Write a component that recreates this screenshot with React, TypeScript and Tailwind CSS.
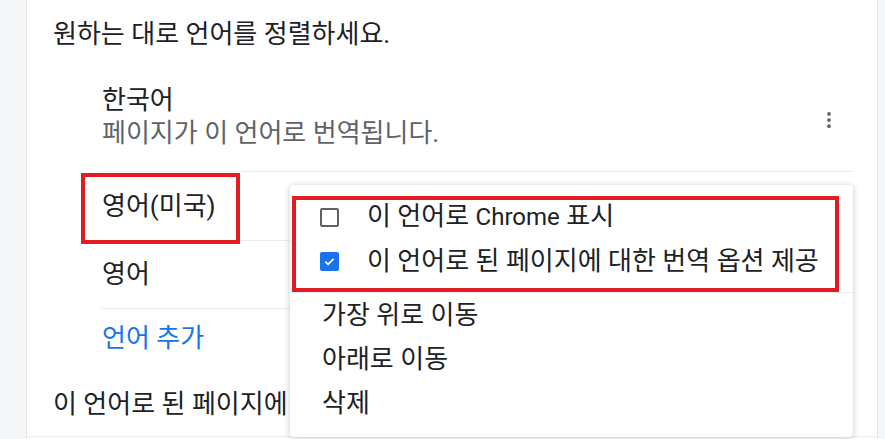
import { ReactNode } from 'react'

function Checkbox({ checked }: { checked?: boolean }) {
  if (checked) {
    return (
      <div className="flex h-[19px] w-[19px] items-center justify-center rounded-[2px] bg-[#1a73e8]">
        <svg viewBox="0 0 20 20" className="h-[15px] w-[15px]" fill="none">
          <path d="M4.5 10.2l3.6 3.6 7.4-7.4" stroke="white" strokeWidth="2.2" />
        </svg>
      </div>
    )
  }
  return <div className="h-[19px] w-[19px] rounded-[2px] border-2 border-[#5f6368] bg-white" />
}

function MenuItem({ children }: { children: ReactNode }) {
  return <div className="flex h-[44px] items-center pl-[32px] text-[#202124]">{children}</div>
}

export default function App() {
  return (
    <div className="relative h-[439px] w-[885px] overflow-hidden bg-[#f6f7f8] font-[Roboto,'Noto_Sans_CJK_KR',sans-serif] text-[26px] leading-[33px] text-[#202124]">
      {/* Settings card */}
      <div className="ml-[26px] h-full w-[852px] border-x border-[#e3e4e6] bg-white">
        <div className="pl-[26px] pt-[18px]">원하는 대로 언어를 정렬하세요.</div>

        <div className="ml-[75px] mr-[25px]">
          <div className="flex items-center border-b border-[#e8eaed] pb-[21px] pt-[33px]">
            <div className="flex-1">
              <div>한국어</div>
              <div className="text-[#5f6368]">페이지가 이 언어로 번역됩니다.</div>
            </div>
            <div className="mt-[6px] flex h-[40px] w-[46px] items-center justify-center">
              <svg viewBox="0 0 4 18" className="h-[17px] w-[4px]" fill="#5f6368">
                <circle cx="2" cy="2" r="2" />
                <circle cx="2" cy="8.5" r="2" />
                <circle cx="2" cy="15" r="2" />
              </svg>
            </div>
          </div>
          <div className="flex h-[69px] items-center border-b border-[#e8eaed]">영어(미국)</div>
          <div className="flex h-[68px] items-center border-b border-[#e8eaed]">영어</div>
          <div className="flex h-[58px] items-center text-[#1a73e8]">언어 추가</div>
        </div>

        <div className="flex h-[70px] items-center border-b border-[#e8eaed] pl-[26px] pt-[6px]">
          이 언어로 된 페이지에 대한 번역 옵션 제공
        </div>
      </div>

      {/* Annotation around the selected language */}
      <div className="absolute left-[81px] top-[173px] h-[71px] w-[159px] border-4 border-[#e31b23]" />

      {/* Context menu */}
      <div className="absolute left-[290px] top-[185px] h-[252px] w-[563px] rounded-[4px] bg-white pt-[10px] shadow-[0_1px_6px_rgba(60,64,67,0.3)]">
        <div className="flex h-[44px] items-center pl-[30px]">
          <Checkbox />
          <span className="ml-[28px]">
            이 언어로 <span className="text-[24px]">Chrome</span> 표시
          </span>
        </div>
        <div className="flex h-[44px] items-center pl-[30px]">
          <Checkbox checked />
          <span className="ml-[28px]">이 언어로 된 페이지에 대한 번역 옵션 제공</span>
        </div>
        <div className="mt-[9px] h-px bg-[#e8eaed]" />
        <MenuItem>가장 위로 이동</MenuItem>
        <MenuItem>아래로 이동</MenuItem>
        <MenuItem>삭제</MenuItem>

        <div className="absolute left-[2px] top-[11px] h-[96px] w-[547px] border-4 border-[#e31b23]" />
      </div>
    </div>
  )
}
